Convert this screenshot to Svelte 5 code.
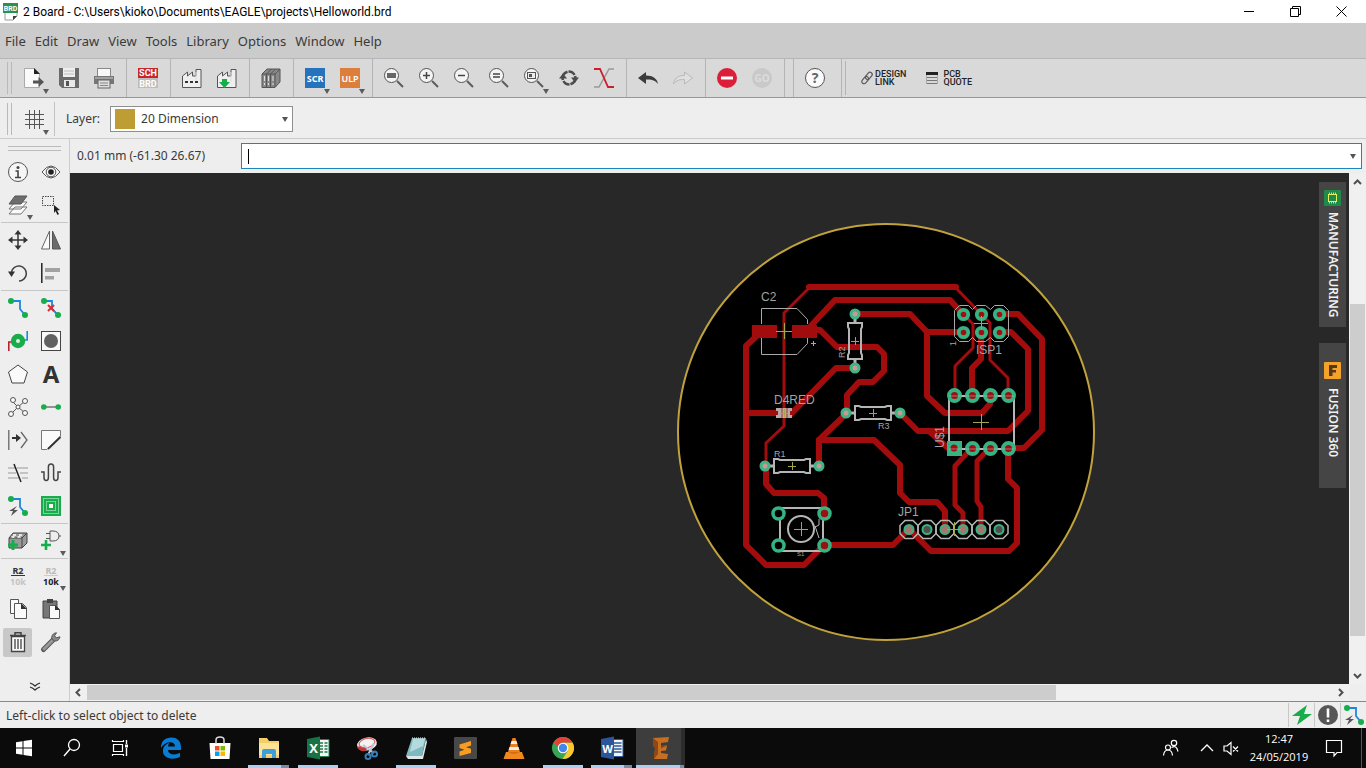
<script>
  const G = '#17ad4b';
  const B = '#1d86dd';
  const lens = (inner) =>
    `<path d="M13 13l6 6" stroke="#5c5c5c" stroke-width="2"/><circle cx="7.5" cy="7.5" r="7" fill="#f4f4f4" stroke="#555"/>${inner}`;
  const factory =
    '<path d="M.5 19.500V8l5-4v4l5-4v4h3.500V1.500h5v18z" fill="#efefef" stroke="#555"/><path d="M14 4v10" stroke="#ddd"/>';

  const icons = {
    brd: '<path d="M2 1h12v12l-4 4H2z" fill="#fff" stroke="#999"/><path d="M10 17v-4h4z" fill="#3d3d3d"/><rect width="15" height="10" fill="#2c9150"/><text x="7.500" y="8" text-anchor="middle" font-size="7" font-weight="700" fill="#fff">BRD</text>',
    open: '<path d="M.5.5h10l5 5v14H.5z" fill="#fafafa" stroke="#aaa"/><path d="M10 0l6 6h-6z" fill="#222"/><path d="M9 12.500h5.500V9l5.500 5-5.500 5v-3.500H9z" fill="#555"/>',
    save: '<path d="M0 0h20v20H3l-3-3z" fill="#6a6a6a"/><rect x="4" width="12" height="9" fill="#eee"/><path d="M5 3h10M5 6h10" stroke="#bbb"/><rect x="5" y="12" width="11" height="7" fill="#e8e8e8"/><rect x="7" y="13" width="3" height="5" fill="#555"/>',
    print: '<rect x="3.500" y=".5" width="13" height="8" fill="#f7f7f7" stroke="#888"/><path d="M0 8h20v8H0z" fill="#777"/><path d="M1 10h18" stroke="#ccc"/><rect x="4" y="12" width="12" height="8" fill="#ddd" stroke="#666"/><path d="M6 15h8M6 17.500h8" stroke="#888"/>',
    schbrd: '<path d="M0 0h20v10H0z" fill="#c8262d"/><path d="M0 10h20v10H0z" fill="#bdbdbd"/><g font-family="Roboto" font-size="9" font-weight="700" fill="#fff" text-anchor="middle"><text x="10" y="8">SCH</text><text x="10" y="19">BRD</text></g>',
    cam: factory + '<path d="M3 14h3M8 14h3M13 14h3" stroke="#333" stroke-width="2"/>',
    camout: factory + `<path d="M5 11h5v3h3l-5.500 6L2 14h3z" fill="${G}"/>`,
    books: '<path d="M1 6l5-5h13v13l-5 5.500H1z" fill="#888" stroke="#555"/><path d="M1 6h13l5-5M5.500 6v13M9.500 6v13M14 6v13M5.500 6l5-5M9.500 6l5-5" stroke="#555" fill="none"/><path d="M3.500 8v9M7.500 8v9M12 8v9" stroke="#ddd" stroke-dasharray="5 2"/>',
    scr: '<path d="M0 0h20v20H0z" fill="#2672bd"/><text x="10" y="13.500" text-anchor="middle" font-size="9" font-weight="700" fill="#fff">SCR</text>',
    ulp: '<path d="M0 0h20v20H0z" fill="#dc7f3c"/><text x="10" y="13.500" text-anchor="middle" font-size="9" font-weight="600" fill="#fff">ULP</text>',
    fit: lens('<rect x="3" y="5" width="9" height="5" fill="#666"/>'),
    zin: lens('<path d="M7.500 4v7M4 7.500h7" stroke="#444" stroke-width="1.500"/>'),
    zout: lens('<path d="M4 7.500h7" stroke="#444" stroke-width="1.500"/>'),
    zeq: lens('<path d="M4 6h7M4 9h7" stroke="#444" stroke-width="1.300"/>'),
    zsel: lens('<rect x="3.500" y="4.500" width="8" height="6" fill="#eee" stroke="#555"/><rect x="5" y="6" width="3" height="3" fill="#555"/>'),
    redraw: '<path d="M3.800 12C3 8 5 5 8.500 3.800M16.200 8c.8 4-1.200 7-4.700 8.200" fill="none" stroke="#4c4c4c" stroke-width="2.600"/><path d="M0 10.500l4-5 4 5zM20 9.500l-4 5-4-5z" fill="#4c4c4c"/><path d="M9.500 3.500c3 0 5 1.200 6 3.500M10.500 16.500c-3 0-5-1.200-6-3.500" fill="none" stroke="#4c4c4c" stroke-width="2.400"/>',
    airwire: '<path d="M20 1h-5L5 19H0" fill="none" stroke="#999" stroke-width="1.500"/><path d="M0 1h6l8 18h6" fill="none" stroke="#cb1f2b" stroke-width="1.800"/>',
    undo: '<path d="M0 10l8-6v3.500c7 0 11 3 12 8.500-3-4-7-4.500-12-4.500V16z" fill="#3b3b3b"/>',
    redo: '<path d="M19.500 10l-8-6v3.500c-7 0-10 3-11 8.500 3-4 6-4.500 11-4.500V16z" fill="#dfdfdf" stroke="#b9b9b9"/>',
    stop: '<circle cx="10" cy="10" r="10" fill="#dc1f39"/><path d="M4 10h12" stroke="#fff" stroke-width="3"/>',
    go: '<circle cx="10" cy="10" r="10" fill="#c9c9c9"/><text x="10" y="14" text-anchor="middle" font-size="10" font-weight="700" fill="#dcdcdc">GO</text>',
    help: '<circle cx="10" cy="10" r="9.500" fill="#fafafa" stroke="#555"/><text x="10" y="15" text-anchor="middle" font-size="14" font-weight="700" fill="#666">?</text>',
    link: '<g fill="none" stroke="#5a5a5a" stroke-width="1.200"><rect x="6" y="3.500" width="8" height="4.500" rx="2.200" transform="rotate(-50 10 6)"/><rect x="2" y="8" width="8" height="4.500" rx="2.200" transform="rotate(-50 6 10)"/></g>',
    quote: '<path d="M2 2h12v3H2z" fill="#222"/><path d="M3 7.500h10M3 10.500h10M2 13.500h12" stroke="#777"/><path d="M2.500 5v9M13.500 5v9" stroke="#aaa"/>',
    grid: '<path d="M5.500 1v19M10.500 1v19M15.500 1v19M1 5.500h19M1 10.500h19M1 15.500h19" stroke="#555"/>',

    info: '<circle cx="10" cy="10" r="9.500" fill="#f6f6f6" stroke="#555"/><circle cx="10" cy="5.500" r="1.500" fill="#444"/><path d="M7.500 9H10v6M7 15.500h6" fill="none" stroke="#444" stroke-width="1.600"/>',
    eye: '<path d="M1 10q9-12 18 0q-9 12-18 0z" fill="#f4f4f4" stroke="#555"/><circle cx="10" cy="10" r="4.800" fill="#f4f4f4" stroke="#555"/><circle cx="10" cy="10" r="2.800" fill="#222"/>',
    layers: '<path d="M1 19l6-7h12l-6 7zM1 14l6-7h12l-6 7z" fill="#fafafa" stroke="#777"/><path d="M1 9l6-8h12l-6 8z" fill="#6d6d6d" stroke="#555"/>',
    group: '<rect x="1.500" y="1.500" width="11" height="9" fill="none" stroke="#444" stroke-dasharray="1.500 1"/><path d="M13 10l6 5-3 .5 2 3.500-1.500 1-2-4-1.500 2z" fill="#222"/>',
    move: '<path d="M10 3v14M3 10h14" stroke="#333" stroke-width="1.500"/><path d="M10 0l3.500 4.500h-7zM10 20l3.500-4.500h-7zM0 10l4.500-3.500v7zM20 10l-4.500-3.500v7z" fill="#333"/>',
    mirror: '<path d="M8.500 1v18h-8z" fill="#fafafa" stroke="#666"/><path d="M11.500 1v18h8z" fill="#6b6b6b" stroke="#555"/>',
    rotate: '<path d="M3.500 9A7.500 7.500 0 1 1 11 18" fill="none" stroke="#444" stroke-width="1.500"/><path d="M0 8.500h7L3.500 14z" fill="#333"/>',
    align: '<path d="M.8 0v20" stroke="#222" stroke-width="1.500"/><path d="M4 5h15v4H4zM4 13h9v3.500H4z" fill="#a2a2a2"/>',
    route: `<path d="M3 3h9v8l5 6" fill="none" stroke="${B}" stroke-width="1.800"/><circle cx="3" cy="3" r="3" fill="${G}"/><circle cx="17" cy="17" r="3" fill="${G}"/>`,
    ripup: `<path d="M3 3h8v8l6 6" fill="none" stroke="${B}" stroke-width="1.800"/><circle cx="3" cy="3" r="3" fill="${G}"/><circle cx="17" cy="17" r="3" fill="${G}"/><path d="M7 7l6 6M13 7l-6 6" stroke="#e0282e" stroke-width="2"/>`,
    via: `<path d="M.8 20v-9h6" fill="none" stroke="#b3262c" stroke-width="1.600"/><path d="M19.200 0v9h-6" fill="none" stroke="${B}" stroke-width="1.600"/><circle cx="10" cy="10" r="7.200" fill="${G}"/><circle cx="10" cy="10" r="2" fill="#dfeee2"/>`,
    hole: '<rect x=".5" y=".5" width="19" height="19" fill="#fafafa" stroke="#444"/><circle cx="10" cy="10" r="7" fill="#616161"/>',
    polygon: '<path d="M10 1l9.500 7-3.500 11H4L.5 8z" fill="#fafafa" stroke="#444"/>',
    letter: '<text x="10" y="18.500" text-anchor="middle" font-size="24" font-weight="700" fill="#333">A</text>',
    ratsnest: '<path d="M4 4l6 6 7-6M3 17l7-7 7 6" fill="none" stroke="#555"/><g fill="#fafafa" stroke="#555"><circle cx="5" cy="3" r="2.500"/><circle cx="17" cy="4" r="2.500"/><circle cx="3" cy="17" r="2.500"/><circle cx="17" cy="16" r="2.500"/><circle cx="10" cy="10" r="2"/></g>',
    signal: `<path d="M3 10h14" stroke="#888" stroke-width="1.800"/><circle cx="2.800" cy="10" r="2.800" fill="${G}"/><circle cx="17.200" cy="10" r="2.800" fill="${G}"/>`,
    split: '<path d="M.8 0v20M13 2l6 8-6 8" fill="none" stroke="#666" stroke-width="1.300"/><path d="M4 7h4V4l5 4-5 4V9H4z" fill="#333"/>',
    miter: '<path d="M.5.500h19V6L6 19.500H.5z" fill="#fafafa" stroke="#777"/><path d="M7 19L19.500 7" stroke="#333" stroke-width="1.800"/>',
    slice: '<path d="M0 5h7M9 5h11M0 10h8M12 10h8M0 15h11M14 15h6" stroke="#999"/><path d="M6 1l7 18" stroke="#222" stroke-width="1.500"/>',
    meander: '<path d="M0 9h3v5.500q0 3 2.200 3t2.200-3V4q0-3 2.600-3t2.600 3v10.500q0 3 2.200 3t2.200-3V9h3" fill="none" stroke="#444" stroke-width="1.500"/>',
    fanout: `<path d="M3 3h9v8l5 6" fill="none" stroke="${B}" stroke-width="1.800"/><circle cx="3" cy="3" r="3" fill="${G}"/><circle cx="17" cy="17" r="3" fill="${G}"/><path d="M9 10l-8 5h4l-2 5 7-6H6z" fill="#555"/>`,
    autoroute: `<rect width="20" height="20" fill="${G}"/><g fill="none" stroke="#e5f7ea" stroke-dasharray="1 1"><rect x="2.500" y="2.500" width="15" height="15"/><rect x="5.500" y="5.500" width="9" height="9"/></g><rect x="8" y="8" width="4" height="4" fill="#fff"/>`,
    part: `<path d="M1 7l4-5h14v10l-5 5H1z" fill="#9a9a9a" stroke="#444"/><path d="M1 7h13l5-5M14 7v10" fill="none" stroke="#444"/><path d="M5 4h3M11 4h3M3.500 6h3M9.500 6h3" stroke="#fff" stroke-width="1.500"/><path d="M5 9v10M0 14h10" stroke="${G}" stroke-width="3"/>`,
    gate: `<path d="M9 0h3c4 0 6 2 6 5s-2 5-6 5h-3V0M5 2.500h4M5 7.500h4M18 5h2" fill="none" stroke="#555"/><path d="M5 9v10M0 14h10" stroke="${G}" stroke-width="2.600"/>`,
    name: '<g text-anchor="middle" font-weight="700" font-size="9"><text x="10" y="7.500" fill="#333">R2</text><text x="10" y="19" fill="#c3c3c3">10k</text></g><path d="M3 9.500h14" stroke="#333"/>',
    value: '<g text-anchor="middle" font-weight="700" font-size="9"><text x="10" y="7.500" fill="#bbb">R2</text><text x="10" y="19" fill="#222">10k</text></g><path d="M3 9.500h14" stroke="#ccc"/>',
    copy: '<path d="M2.500.5h8v14h-8z" fill="#fafafa" stroke="#555"/><path d="M6.500 4.500h8l4 4v11h-12z" fill="#fafafa" stroke="#555"/><path d="M13 4l6 6h-6z" fill="#333"/>',
    paste: '<path d="M2 2h14v17H2z" fill="#777" stroke="#444"/><path d="M6 0h6v4H6z" fill="#444"/><path d="M8.500 6.500h6l4 4v9h-10z" fill="#fafafa" stroke="#555"/><path d="M14 6l5 5h-5z" fill="#333"/>',
    trash: '<path d="M3.500 4.500h13v15h-13z" fill="#fafafa" stroke="#444" stroke-width="1.300"/><path d="M2 3.500h16M7 3V.8h6V3" fill="none" stroke="#444" stroke-width="1.500"/><path d="M7 7v10M10 7v10M13 7v10" stroke="#444" stroke-width="1.300"/>',
    wrench: '<path d="M2.500 17.500L13 7" stroke="#555" stroke-width="5" stroke-linecap="round"/><path d="M3 17L13 7" stroke="#999" stroke-width="3" stroke-linecap="round"/><path d="M15.500.8c-3 .2-5.500 2.500-4.500 6.500 3 3 7 2 8-2.500l-3.500 1-2-2z" fill="#888" stroke="#555"/>',

    bolt: `<path d="M15 0L0 11h8l-3 9 15-11h-8z" fill="${G}"/>`,
    alert: '<circle cx="10" cy="10" r="10" fill="#565656"/><path d="M10 3.500v9M10 14.500V17" stroke="#fff" stroke-width="2.600"/>',

    start: '<path d="M4 6.200l6.500-1v6.300H4zM11.500 5L20 3.800v7.700h-8.500zM4 12.500h6.500v6.300l-6.500-1zM11.500 12.500H20v7.700L11.500 19z" fill="#fff"/>',
    search: '<circle cx="14" cy="9" r="5.500" fill="none" stroke="#fff" stroke-width="1.300"/><path d="M10 13l-6 7" stroke="#fff" stroke-width="1.400"/>',
    tasks: '<path d="M5.500 8.500h9v7h-9zM4.500 4v1.500h11V4M4.500 20v-1.500h11V20" fill="none" stroke="#fff" stroke-width="1.200"/><path d="M18.500 4v4M18.500 12v8" stroke="#fff" stroke-width="1.400"/><path d="M17 8.500h3v3h-3z" fill="#fff"/>',
    edge: '<path d="M2 12C2 5 6 1.500 12.500 1.500S22 6 22 11v3H9c.4 5 7 5.500 12 2.800v4.300C12 25 3 21.500 4 14c.5-4 3.500-6.500 6.500-7-1 1-1.500 2.200-1.500 3.500h7C16 4.500 6 5 2 12z" fill="#087bd2"/>',
    store: '<path d="M1.500 7h21l-1 16h-19z" fill="#fff"/><path d="M8 8V4c0-4 8-4 8 0v4" fill="none" stroke="#ddd" stroke-width="1.500"/><path d="M7 10h4.500v4.500H7z" fill="#ef5023"/><path d="M12.500 10H17v4.500h-4.500z" fill="#7fb900"/><path d="M7 15.500h4.500V20H7z" fill="#00a3ee"/><path d="M12.500 15.500H17V20h-4.500z" fill="#feb800"/>',
    folder: '<path d="M2 2h8l2 3h10v17H2z" fill="#f4ce68"/><path d="M2 7h20v12H2z" fill="#fbe294"/><path d="M5 22v-7q0-2 2-2h10q2 0 2 2v7h-4v-4H9v4z" fill="#3c9edb"/>',
    excel: '<path d="M12 3.500h11v17H12z" fill="#f4f4f4" stroke="#208355"/><path d="M14 7h3M18.500 7h3M14 10h3M18.500 10h3M14 13h3M18.500 13h3M14 16h3M18.500 16h3" stroke="#1f7547" stroke-width="1.500"/><path d="M1 3l13-2.500v23L1 21z" fill="#177245"/><text x="7.500" y="17" text-anchor="middle" font-size="13" font-weight="700" fill="#fff">X</text>',
    snip: '<ellipse cx="12" cy="8" rx="10" ry="6.500" fill="#e9e9ec" transform="rotate(-12 12 8)"/><path d="M2 11q2 5 9 4l3-7" fill="#bf3a38"/><ellipse cx="12" cy="7" rx="8" ry="4.500" fill="#f3f3f5" stroke="#d95651" transform="rotate(-12 12 7)"/><path d="M8 9l11 8M19 7l-6 12" stroke="#bcc8d5" stroke-width="2"/><circle cx="19.500" cy="18" r="2.500" fill="none" stroke="#397fb5" stroke-width="2"/><circle cx="13" cy="20.500" r="2.500" fill="none" stroke="#397fb5" stroke-width="2"/>',
    notes: '<path d="M8 2h14l-4 18H2z" fill="#7eb9c0"/><path d="M9 3h12l-2 7L6 16z" fill="#b5dadd"/><path d="M2 20l16 0 4-17 1 3-4 17H4z" fill="#dfe6e8"/><path d="M8 2h14" stroke="#e2eef0" stroke-dasharray="1 1"/>',
    sublime: '<rect x="1" y="1" width="23" height="22" rx="1" fill="#484848"/><path d="M6.500 8.500L18 5v4.500l-5 1.700 5 1.600v4.200L6.500 20v-4.500l5-1.800-5-1.600z" fill="#f99d22"/>',
    vlc: '<path d="M10.500 2h3L18 16H6z" fill="#ed7f1c"/><path d="M9.600 5h4.800l1 3H8.600zM7.600 11h8.800l1 3H6.600z" fill="#f5f0e8"/><path d="M4 16h16l2.500 7h-21z" fill="#ee8a1d"/><path d="M6 16q6 4 12 0" fill="#d66b12"/>',
    chrome: '<circle cx="12" cy="12" r="11" fill="#36a554"/><path d="M21.500 6.500A11 11 0 0 1 11.500 23L16.800 14.800 12 6.500z" fill="#fbc72e"/><path d="M2.500 6.500A11 11 0 0 1 21.500 6.500H12a5.500 5.500 0 0 0-5 4z" fill="#e34335"/><circle cx="12" cy="12" r="5.300" fill="#fff"/><circle cx="12" cy="12" r="4.200" fill="#4486ef"/>',
    word: '<path d="M12 3.500h11v17H12z" fill="#f4f4f4" stroke="#2c5898"/><path d="M14 7h7.500M14 10h7.500M14 13h7.500M14 16h7.500" stroke="#2b579a" stroke-width="1.500"/><path d="M1 3l13-2.500v23L1 21z" fill="#2b579a"/><text x="7.500" y="16.500" text-anchor="middle" font-size="11" font-weight="700" fill="#fff">W</text>',
    eagle: '<path d="M4 2l16-1-1 5-7 1v3l6-.5-1 5-5 .5v2l7 1-1 5H5l1-11-2-3z" fill="#c66f22"/><path d="M4 2l5 4v12l-4 5 1-11-2-3zM18 9.500l-6 3v-2.500z" fill="#8f4814"/>',
    people: '<g fill="none" stroke="#fff" stroke-width="1.200"><circle cx="9" cy="11.500" r="2.500"/><circle cx="15" cy="7" r="2.700"/><path d="M4.500 19.500q.5-5.500 4.500-5.500t4.500 5.500M12.500 11.500q5-3 6.500 4"/></g>',
    up: '<path d="M6 15l6-6 6 6" fill="none" stroke="#fff" stroke-width="1.300"/>',
    mute: '<path d="M5 10v5h3l4 3.500v-12L8 10zM14 10.500l5 5M19 10.500l-5 5" fill="none" stroke="#fff" stroke-width="1.200"/>',
    action: '<path d="M4.500 4.500h15v12H15L12 20v-3.500H4.500z" fill="none" stroke="#fff" stroke-width="1.200"/>'
  };

  const menus = ['File', 'Edit', 'Draw', 'View', 'Tools', 'Library', 'Options', 'Window', 'Help'];

  const mainGroups = [
    [['open', 'Open', true], ['save', 'Save'], ['print', 'Print']],
    [['schbrd', 'Schematic']],
    [['cam', 'CAM processor'], ['camout', 'Export CAM']],
    [['books', 'Libraries']],
    [['scr', 'Run script', true], ['ulp', 'Run ULP', true]],
    [['fit', 'Zoom to fit'], ['zin', 'Zoom in'], ['zout', 'Zoom out'], ['zeq', 'Zoom reset'], ['zsel', 'Zoom select', true], ['redraw', 'Redraw'], ['airwire', 'Airwires']],
    [['undo', 'Undo'], ['redo', 'Redo']],
    [['stop', 'Stop'], ['go', 'Go']]
  ];

  const sideGroups = [
    [['info', 'Info'], ['eye', 'Show'], ['layers', 'Layers', true], ['group', 'Group']],
    [['move', 'Move'], ['mirror', 'Mirror'], ['rotate', 'Rotate'], ['align', 'Align']],
    [['route', 'Route'], ['ripup', 'Ripup'], ['via', 'Via'], ['hole', 'Hole'], ['polygon', 'Polygon'], ['letter', 'Text'], ['ratsnest', 'Ratsnest'], ['signal', 'Signal'], ['split', 'Split'], ['miter', 'Miter'], ['slice', 'Slice'], ['meander', 'Meander'], ['fanout', 'Fanout'], ['autoroute', 'Autorouter']],
    [['part', 'Add part'], ['gate', 'Replace', true]],
    [['name', 'Name'], ['value', 'Value', true], ['copy', 'Copy'], ['paste', 'Paste'], ['trash', 'Delete'], ['wrench', 'Change']]
  ];

  const apps = [
    ['edge', ''], ['store', ''], ['folder', 'multi'], ['excel', 'open'], ['snip', ''], ['notes', 'open'], ['sublime', ''],
    ['vlc', ''], ['chrome', 'open'], ['word', 'multi'], ['eagle', 'multi active']
  ];

  const wide = [
    'M809 287H956',
    'M807 330L835 300H950L963 314',
    'M855 314H910L927 332H963M927 332V396L945 413H982L990 404V395',
    'M981 332V359L972 368V395',
    'M999 314H1018L1042 339V430L1024 448H1008',
    'M999 332H1011L1028 349V411L1008 431H918L900 413M929 431L948 448H954',
    'M762 331L746 346V545L766 565H804L824 545H893L909 529',
    'M746 413H778',
    'M790 415L836 368H855',
    'M816 330H820L837 347H877L884 354V371L873 382H859L847 395V413L819 440V466',
    'M819 440H874L900 465V493L909 502H937L945 511V529',
    'M766 466V484L774 493H818L824 498V513',
    'M1008 448V479L1017 488V543L1009 551H931L909 529'
  ];
  const medium = ['M972 448L955 466V505L963 513V529', 'M990 448L977 461V501L981 507V529'];
  const thin = [
    'M810 287L784 313V426L766 443V466',
    'M955 287L981 314L990 323V360L1008 378V395',
    'M963 314L973 324V348L955 366V395'
  ];

  const ispPins = [314, 332].flatMap((y) => [963, 981, 999].map((x) => [x, y]));
  const icPins = [...[954, 972, 990, 1008].map((x) => [x, 395]), ...[972, 990, 1008].map((x) => [x, 448])];
  const jpPins = [909, 927, 945, 963, 981, 999];
  const resistors = [
    [873, 413, 0],
    [792, 466, 0],
    [855, 341, 90]
  ];
  const crosses = [[784, 331, 8], [855, 341, 4], [873, 413, 4], [792, 466, 4], [981, 323, 7], [981, 422, 8], [801, 529, 7], [954, 529, 7], [784, 413, 4]];
</script>

{#snippet icon(name, size = 20)}
  <svg class="icon" width={size} height={size} viewBox="0 0 {size} {size}" fill="none" aria-hidden="true">{@html icons[name]}</svg>
{/snippet}

{#snippet tool([name, label, more])}
  <button class="tool" class:on={name === 'trash'} aria-label={label}>
    {@render icon(name)}
    {#if more}<span class="caret"></span>{/if}
  </button>
{/snippet}

<div class="window">
  <header class="title">
    {@render icon('brd', 18)}
    <span class="caption">2 Board - C:\Users\kioko\Documents\EAGLE\projects\Helloworld.brd</span>
    <button aria-label="Minimize"><svg width="11" height="11"><path d="M0 5.500h10" /></svg></button>
    <button aria-label="Restore"><svg width="11" height="11"><path d="M.5 2.500h8v8h-8zM2.500 2.500v-2h8v8h-2" /></svg></button>
    <button aria-label="Close"><svg width="11" height="11"><path d="M.5.500l10 10M10.500.500l-10 10" /></svg></button>
  </header>

  <nav class="menu">
    {#each menus as m}<button>{m}</button>{/each}
  </nav>

  <div class="toolbar">
    <span class="grip"></span>
    {#each mainGroups as group, i}
      {#if i}<span class="sep"></span>{/if}
      {#each group as t}{@render tool(t)}{/each}
    {/each}
    <span class="sep"></span>
    <span class="sep"></span>
    {@render tool(['help', 'Help'])}
    <span class="sep tail"></span>
    <span class="bar"></span>
    <button class="service">{@render icon('link', 16)}<span>DESIGN<br />LINK</span></button>
    <button class="service">{@render icon('quote', 16)}<span>PCB<br />QUOTE</span></button>
  </div>

  <div class="layerbar">
    <span class="grip"></span>
    {@render tool(['grid', 'Grid', true])}
    <span class="rule"></span>
    <label for="layer">Layer:</label>
    <div class="combo">
      <span class="swatch"></span>
      <select id="layer"><option>20 Dimension</option></select>
      <span class="arrow"></span>
    </div>
  </div>

  <div class="body">
    <aside>
      <span class="hgrip"></span>
      {#each sideGroups as group}
        <div class="group">
          {#each group as t}{@render tool(t)}{/each}
        </div>
      {/each}
      <button class="expand" aria-label="More tools"><svg width="12" height="10" fill="none" stroke="#333" stroke-width="1.300"><path d="M1 1q3 1 5 3q2-2 5-3M1 5q3 1 5 3q2-2 5-3" /></svg></button>
    </aside>

    <main>
      <div class="command">
        <label for="cmd">0.01 mm (-61.30 26.67)</label>
        <div class="entry">
          <span class="cursor"></span>
          <input id="cmd" type="text" />
          <span class="arrow"></span>
        </div>
      </div>

      <div class="work">
        <div class="canvas">
          <svg class="board" viewBox="70 173 1279 511" role="img" aria-label="Board layout">
            <circle cx="886" cy="432" r="208" fill="#000" stroke="#c0a23c" stroke-width="2" />
            <g fill="none" stroke="#a30c0d" stroke-linejoin="round" stroke-linecap="round">
              {#each wide as d}<path {d} stroke-width="6" />{/each}
              {#each medium as d}<path {d} stroke-width="5" />{/each}
              {#each thin as d}<path {d} stroke-width="3" />{/each}
            </g>
            <path d="M752 325h25v13h-25zM792 325h25v13h-25z" fill="#a30c0d" />

            <g fill="none" stroke="#a9a9a9">
              <path d="M761.500 324v-15.500H797l10.500 11V324M761.500 338v16.500H797l10.500-11V338M811 343.500h5M813.500 341v5" />
              <path d="M954.500 310.500l5-5h9l4 4 4-4h9l5 4 4-4h9l5 5v26l-5 5h-9l-4-4-5 4h-9l-4-4-4 4h-9l-5-5z" />
            </g>
            <g fill="none" stroke="#b5b5b5" stroke-width="1.500">
              {#each jpPins as x}
                <path d="M{x - 9} {525.5}l5-5h8l5 5v8l-5 5h-8l-5-5z" />
              {/each}
            </g>
            <rect x="949" y="396" width="65" height="53" fill="none" stroke="#b5b5b5" stroke-width="2" />
            <g fill="none" stroke="#b5b5b5" stroke-width="2">
              <rect x="780" y="508" width="43" height="43" />
              <circle cx="801" cy="529" r="13" />
              <path d="M819 519v6l-4 2M815 526l4 12" stroke-width="1" />
            </g>

            {#each resistors as [x, y, r]}
              <g transform="translate({x} {y}) rotate({r})" fill="none">
                <path d="M-27 0h9M18 0h9" stroke="#b5b5b5" stroke-width="3" />
                <path d="M-18-7h4l2 1h24l2-1h4v14h-4l-2-1h-24l-2 1h-4z" stroke="#b5b5b5" stroke-width="2" />
                <g fill="#c99a92" stroke="#3fb587" stroke-width="3">
                  <circle cx="-27" r="4" />
                  <circle cx="27" r="4" />
                </g>
              </g>
            {/each}

            <path d="M776 408h16v3h-2v4h2v3h-16v-3h2v-4h-2z" fill="#b9a9a5" />
            <path d="M782 408v10M787 408v10" stroke="#a03030" />

            <g fill="#9c1011" stroke="#36b383">
              {#each ispPins as [x, y]}<circle cx={x + 0.5} cy={y + 0.5} r="4.700" stroke-width="3.800" />{/each}
              {#each icPins as [x, y]}<circle cx={x + 0.5} cy={y + 0.5} r="5.500" stroke-width="4" />{/each}
              <rect x="947" y="441" width="15" height="15" fill="#36b383" stroke="none" />
              <circle cx="954" cy="448" r="3.500" stroke="none" />
              {#each jpPins as x}<circle cx={x} cy="529.5" r="4.500" fill={x === 927 || x === 999 ? '#504f4d' : '#a5766e'} stroke-width="2" />{/each}
              {#each [[778, 513], [778, 545]] as [x, y]}<circle cx={x + 0.5} cy={y + 0.5} r="5.500" fill="#000" stroke-width="3.500" />{/each}
              {#each [[824, 513], [824, 545]] as [x, y]}<circle cx={x + 0.5} cy={y + 0.5} r="5.500" stroke-width="3.500" />{/each}
            </g>
            <path d="M949 396H1014M949 449H1014" stroke="#b5b5b5" opacity=".6" />
            <g stroke="#a5a648">
              {#each crosses as [x, y, s]}<path d="M{x - s} {y + 0.5}h{s * 2}M{x + 0.5} {y - s}v{s * 2}" />{/each}
            </g>

            <g class="silk">
              <text x="761" y="301">C2</text>
              <text x="774" y="404">D4RED</text>
              <text x="976" y="354">ISP1</text>
              <text x="898" y="516">JP1</text>
              <text transform="translate(944 448) rotate(-90)">U$1</text>
              <text class="small" x="774" y="457">R1</text>
              <text class="small" x="878" y="429">R3</text>
              <text class="small" transform="translate(845 358) rotate(-90)">R2</text>
              <text class="small" transform="translate(956 346) rotate(-90)">1</text>
              <text class="tiny" x="797" y="556">S1</text>
            </g>
          </svg>

          <div class="tabs">
            <button>
              <svg width="17" height="16"><rect width="17" height="16" rx="1" fill="#208a48" /><path d="M5 3.500h7M5 12.500h7" stroke="#d6df3c" stroke-width="2" stroke-dasharray="1 1" /><rect x="4.500" y="4.500" width="8" height="7" fill="#208a48" stroke="#e8ee62" /></svg>
              <span>MANUFACTURING</span>
            </button>
            <button class="fusion">
              <svg width="17" height="17"><rect width="17" height="17" rx="1" fill="#f3a32a" /><path d="M5 3h8v3H8.500v2H12v2.500H8.500V14H5z" fill="#59381a" /></svg>
              <span>FUSION 360</span>
            </button>
          </div>
        </div>

        <div class="vscroll">
          <svg width="9" height="6"><path d="M1 5l3.500-3.500L8 5" /></svg>
          <div class="track"><span class="thumb"></span></div>
          <svg width="9" height="6"><path d="M1 1l3.500 3.500L8 1" /></svg>
        </div>
        <div class="hscroll">
          <svg width="6" height="9"><path d="M5 1L1.500 4.500 5 8" /></svg>
          <div class="track"><span class="thumb"></span></div>
          <svg width="6" height="9"><path d="M1 1l3.500 3.500L1 8" /></svg>
        </div>
      </div>
    </main>
  </div>

  <div class="status">
    <span class="message">Left-click to select object to delete</span>
    {#each ['bolt', 'alert', 'fanout'] as s}
      <span class="cell">{@render icon(s)}</span>
    {/each}
  </div>

  <footer>
    {#each [['start', 'Start'], ['search', 'Search'], ['tasks', 'Task view']] as [n, l]}
      <button class="sys" aria-label={l}>{@render icon(n, 24)}</button>
    {/each}
    <div class="apps">
      {#each apps as [n, state]}
        <button class="app {state}" aria-label={n}>{@render icon(n, 24)}</button>
      {/each}
    </div>
    <button class="tray" aria-label="People">{@render icon('people', 24)}</button>
    <button class="tray last" aria-label="Hidden icons">{@render icon('up', 24)}</button>
    <button class="tray" aria-label="Volume">{@render icon('mute', 24)}</button>
    <div class="clock"><span>12:47</span><span>24/05/2019</span></div>
    <button class="notify" aria-label="Notifications">{@render icon('action', 24)}</button>
  </footer>
</div>

<style>
  :global(body) {
    margin: 0;
  }
  .window {
    display: flex;
    flex-direction: column;
    height: 100vh;
    min-height: 720px;
    overflow: hidden;
    font: 12px/16px 'Noto Sans', sans-serif;
    color: #3a3a3a;
    background: #eee;
  }
  * {
    box-sizing: border-box;
  }
  button {
    padding: 0;
    border: 0;
    background: none;
    font: inherit;
    color: inherit;
  }
  svg {
    display: block;
    flex: none;
  }
  .icon {
    overflow: visible;
  }

  .title {
    display: flex;
    flex: none;
    align-items: center;
    height: 23px;
    padding: 0 2px 0 3px;
    background: #fff;
    color: #000;
    font-family: Roboto, sans-serif;
  }
  .caption {
    flex: 1;
    padding-left: 2px;
  }
  .title button {
    display: grid;
    place-items: center;
    width: 46px;
    height: 22px;
  }
  .title button svg {
    fill: none;
    stroke: #000;
  }

  .menu {
    display: flex;
    flex: none;
    gap: 9px;
    height: 36px;
    padding-left: 5px;
    border-bottom: 1px solid #b5b5b5;
    background: #cbcbcb;
    font-size: 13px;
  }

  .toolbar {
    display: flex;
    flex: none;
    align-items: center;
    height: 39px;
    border-bottom: 1px solid #979797;
    background: #d9d9d9;
  }
  .grip {
    width: 5px;
    height: 32px;
    margin: 0 4px 0 7px;
    border: solid #b9b9b9;
    border-width: 0 1px;
  }
  .sep {
    width: 9px;
    height: 38px;
    background: linear-gradient(#b4b4b4, #b4b4b4) 5px 0 / 1px 100% no-repeat;
  }
  .tail {
    margin-left: 4px;
  }
  .bar {
    width: 1px;
    height: 34px;
    margin-right: 13px;
    background: #b4b4b4;
  }
  .tool {
    position: relative;
    display: grid;
    place-items: center;
    width: 35px;
    height: 33px;
  }
  .caret {
    position: absolute;
    right: 2px;
    bottom: 1px;
    border: 3px solid transparent;
    border-top: 5px solid #5c5c5c;
    border-bottom: 0;
  }
  .service {
    display: flex;
    align-items: center;
    margin-right: 18px;
    font: 500 9px/8px Roboto, sans-serif;
    text-align: left;
    color: #222;
  }
  .service + .service span {
    padding-left: 3px;
  }

  .layerbar {
    display: flex;
    flex: none;
    align-items: center;
    height: 41px;
    padding-top: 2px;
    border-bottom: 1px solid #ccc;
  }
  .rule {
    width: 1px;
    height: 34px;
    margin: 0 11px 0 3px;
    background: #c2c2c2;
  }
  .combo {
    display: flex;
    align-items: center;
    width: 183px;
    height: 26px;
    margin-left: 10px;
    padding: 0 4px;
    border: 1px solid #8f8f8f;
    background: #fff;
  }
  .swatch {
    width: 20px;
    height: 20px;
    background: #bf9d35;
  }
  select,
  input {
    flex: 1;
    min-width: 0;
    padding: 0;
    border: 0;
    outline: 0;
    background: none;
    appearance: none;
    font: inherit;
    color: inherit;
  }
  select {
    padding-left: 6px;
  }
  .arrow {
    border: 3px solid transparent;
    border-top: 5px solid #555;
    border-bottom: 0;
  }

  .body {
    display: flex;
    flex: 1;
    min-height: 0;
  }
  aside {
    flex: none;
    width: 70px;
    padding: 7px 1px 0;
    border-right: 1px solid #ccc;
  }
  .hgrip {
    display: block;
    height: 5px;
    margin: 0 7px 5px;
    border: solid #bbb;
    border-width: 1px 0;
  }
  .group {
    display: grid;
    grid-template-columns: 33px 33px;
  }
  .group + .group {
    padding-top: 1px;
    border-top: 1px solid #c6c6c6;
  }
  .group .tool {
    width: 33px;
    padding-bottom: 1px;
  }
  .group .caret {
    right: 1px;
    bottom: 2px;
  }
  .group .on {
    width: 29px;
    height: 29px;
    margin: 2px;
    border-radius: 2px;
    background: #c8c8c8;
  }
  .expand {
    display: grid;
    place-items: center;
    width: 100%;
    height: 55px;
  }

  main {
    display: flex;
    flex: 1;
    flex-direction: column;
    min-width: 0;
  }
  .command {
    display: flex;
    flex: none;
    align-items: center;
    height: 34px;
    padding: 0 4px 0 7px;
  }
  .command label {
    width: 164px;
  }
  .entry {
    display: flex;
    flex: 1;
    align-items: center;
    height: 26px;
    padding: 0 5px 0 6px;
    border: 1px solid #1b87bd;
    background: #fff;
  }
  .cursor {
    width: 1px;
    height: 15px;
    background: #000;
  }
  .work {
    display: grid;
    flex: 1;
    grid-template: minmax(0, 1fr) 17px / minmax(0, 1fr) 17px;
    min-height: 0;
  }
  .canvas {
    position: relative;
    background: #282828;
  }
  .board {
    width: 100%;
    height: 100%;
  }
  .silk {
    font: 12px 'Liberation Sans', sans-serif;
    fill: #a3a3a3;
  }
  .small {
    font-size: 9px;
  }
  .tiny {
    font-size: 6px;
  }
  .tabs {
    position: absolute;
    top: 9px;
    right: 3px;
    display: flex;
    flex-direction: column;
    gap: 16px;
  }
  .tabs button {
    display: flex;
    flex-direction: column;
    gap: 6px;
    align-items: center;
    width: 27px;
    height: 145px;
    padding-top: 8px;
    background: #454545;
    color: #f0f0f0;
    font-weight: 600;
  }
  .tabs .fusion {
    gap: 9px;
    padding-top: 19px;
  }
  .tabs span {
    writing-mode: vertical-rl;
  }
  .vscroll,
  .hscroll {
    display: flex;
    align-items: center;
    background: #f0f0f0;
  }
  .vscroll svg,
  .hscroll svg {
    fill: none;
    stroke: #505050;
    stroke-width: 2;
  }
  .vscroll {
    flex-direction: column;
    padding: 6px 0 5px;
  }
  .track {
    display: flex;
    flex: 1;
  }
  .vscroll .track {
    flex-direction: column;
    width: 15px;
    margin: 5px 0;
  }
  .vscroll .thumb {
    height: 69.4%;
    margin-top: 114px;
  }
  .hscroll {
    padding: 0 5px;
  }
  .hscroll .track {
    height: 15px;
    margin: 0 6px;
  }
  .hscroll .thumb {
    width: 77.8%;
  }
  .thumb {
    flex: none;
    background: #cdcdcd;
  }

  .status {
    display: flex;
    flex: none;
    align-items: center;
    height: 27px;
    border-top: 1px solid #888;
  }
  .message {
    flex: 1;
    padding: 2px 0 0 6px;
  }
  .cell {
    display: grid;
    place-items: center;
    width: 26px;
    height: 24px;
    border-left: 1px solid #c8c8c8;
  }

  footer {
    display: flex;
    flex: none;
    align-items: center;
    height: 40px;
    background: #0b0b0b;
    color: #fff;
    font-family: 'Open Sans', sans-serif;
  }
  footer button {
    display: grid;
    place-items: center;
    height: 40px;
  }
  .sys {
    width: 48px;
  }
  .apps {
    display: flex;
    flex: 1;
    padding-left: 2px;
  }
  .app {
    width: 49px;
  }
  .open {
    background: linear-gradient(#a9d0f3, #a9d0f3) 50% 100% / 40px 3px no-repeat;
  }
  .multi {
    background:
      linear-gradient(#a9d0f3, #a9d0f3) 4px 100% / 33px 3px no-repeat,
      linear-gradient(#728da5, #728da5) 37px 100% / 8px 3px no-repeat;
  }
  .active {
    background:
      linear-gradient(#a9d0f3, #a9d0f3) 0 100% / 44px 3px no-repeat,
      linear-gradient(#728da5, #728da5) 44px 100% / 4px 3px no-repeat,
      linear-gradient(90deg, #3d3d3d 45px, #2c2c2c 45px);
  }
  .tray {
    width: 24px;
  }
  .last {
    margin-left: 12px;
  }
  .clock {
    display: flex;
    flex-direction: column;
    gap: 2px;
    width: 72px;
    font-size: 11px;
    text-align: center;
  }
  .notify {
    width: 52px;
    margin: 0 4px 0 -5px;
    padding-right: 4px;
    border-right: 1px solid #555;
  }
</style>
